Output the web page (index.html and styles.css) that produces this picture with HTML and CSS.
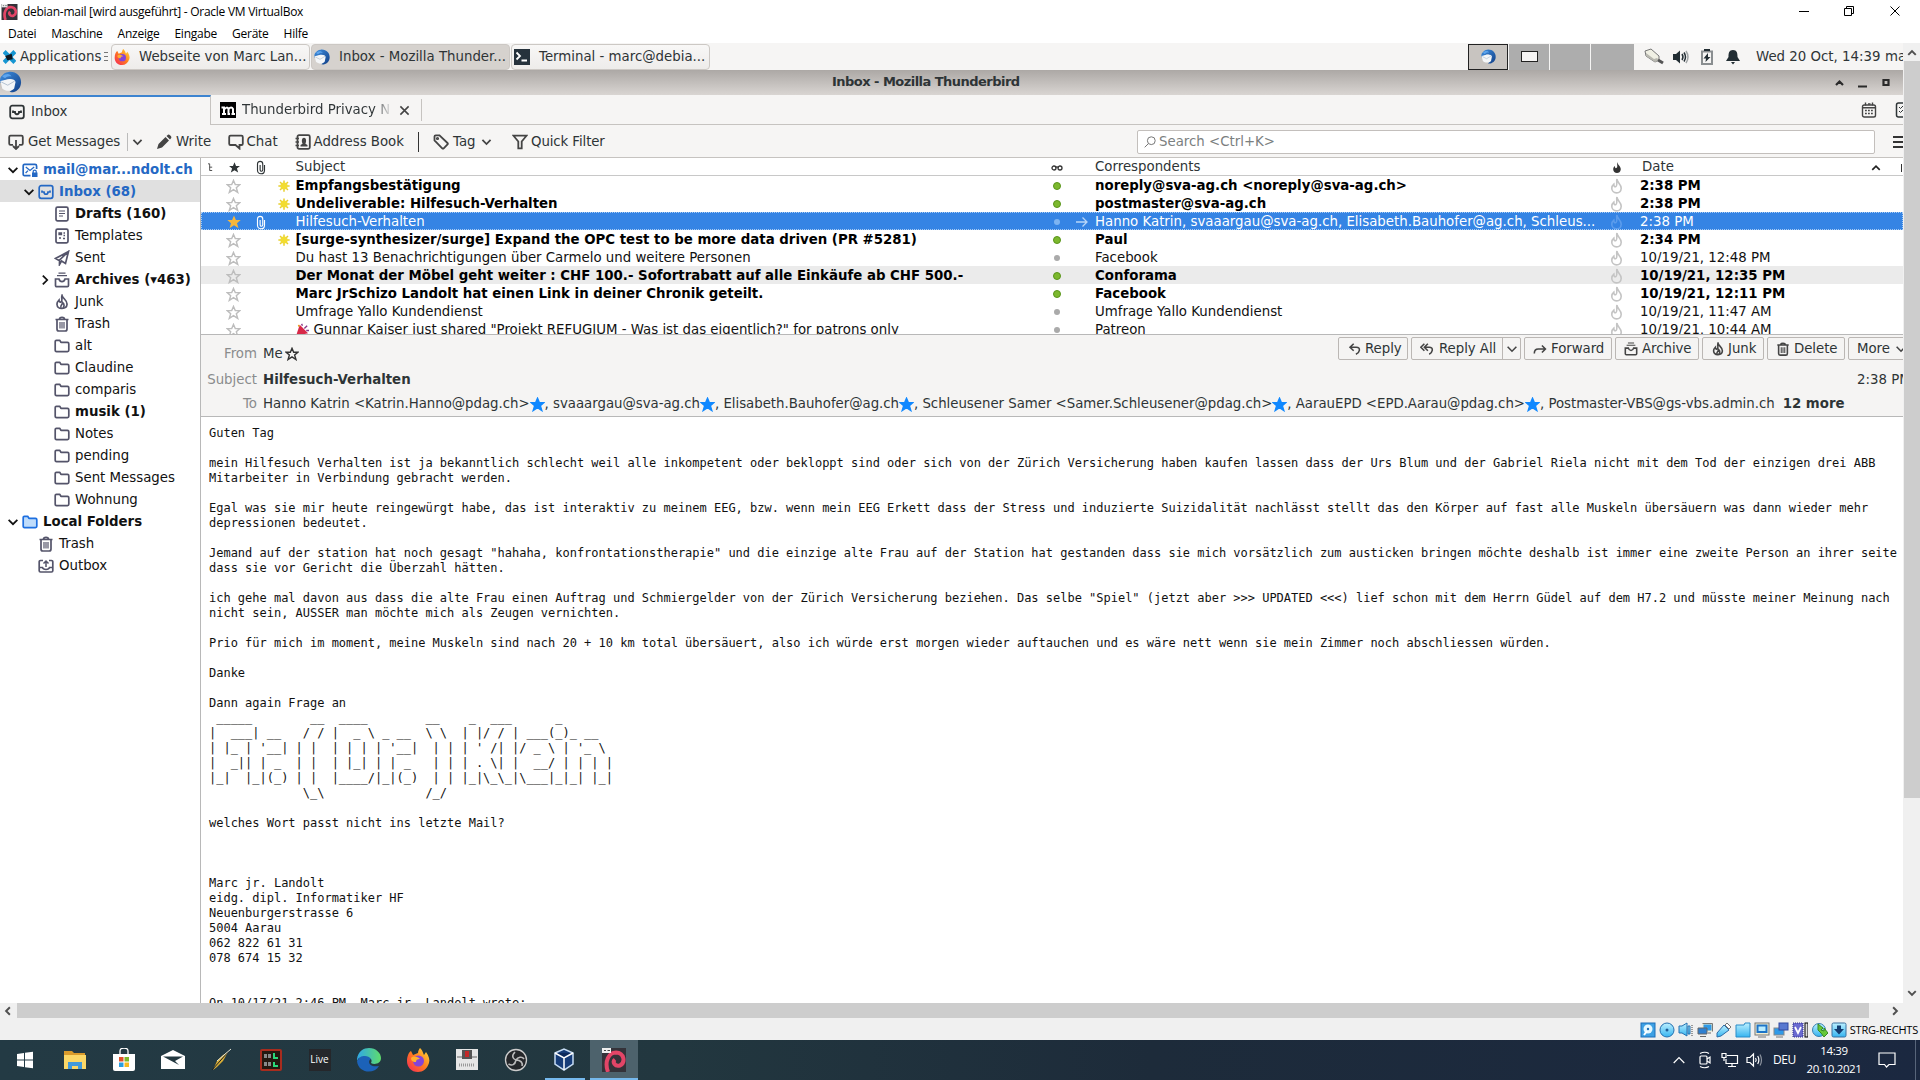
FILE: index.html
```html
<!DOCTYPE html>
<html lang="de">
<head>
<meta charset="utf-8">
<title>debian-mail - Oracle VM VirtualBox</title>
<link rel="stylesheet" href="styles.css">
</head>
<body>
<svg class="defs" aria-hidden="true">
  <defs>
    <linearGradient id="tbg" x1="0" y1="0" x2="1" y2="1"><stop offset="0" stop-color="#3f8fe0"/><stop offset="1" stop-color="#123f86"/></linearGradient>
    <linearGradient id="ffg" x1="1" y1="0" x2="0" y2="1"><stop offset="0" stop-color="#ffe23a"/><stop offset=".5" stop-color="#ff7a1f"/><stop offset="1" stop-color="#f5225c"/></linearGradient>
    <linearGradient id="edg" x1="0" y1="0" x2="1" y2="0"><stop offset="0" stop-color="#2fa8e8"/><stop offset="1" stop-color="#5fdc6c"/></linearGradient>
    <linearGradient id="sky" x1="0" y1="0" x2="0" y2="1"><stop offset="0" stop-color="#bdf0ff"/><stop offset="1" stop-color="#35b4f0"/></linearGradient>
  </defs>
  <symbol id="thunderbird" viewBox="0 0 24 24"><path fill="url(#tbg)" d="M10 1C18 0 24 6 23.500 13C23 20 17 24 11 23C14 20 17 17 16 12C14 8 8 8 3 12L1 13C0 9 1 6 3 5C4 3 6 1.500 10 1Z"/><path fill="#f4f6f8" d="M1 11L7 9.500C12 8 17 9 17.500 12L16 19C13 23 6 22 3 19Z"/><path fill="none" stroke="#aebccd" d="M2 12L9 15.500L16.500 11"/><path fill="#5da5ee" d="M3 6C7 2 12 3 13 6C10 5 8 6 6 8Z"/></symbol>
  <symbol id="firefox" viewBox="0 0 24 24"><path fill="url(#ffg)" d="M14 0C17 3 17 5 18 7L20 4C23 8 24 12 23 15C21 21 17 24 12 24C5 24 1 19 1 13C1 8 3 4 5 3L7 7L12 5C12 3 13 1 14 0Z"/><circle cx="12.500" cy="13" r="5.500" fill="#8344d8"/><path fill="#ffb02e" d="M5 10C8 7 12 9 14 11C11 11 10 12 10 14C6 14 5 12 5 10Z"/></symbol>
  <symbol id="debian" viewBox="0 0 24 24"><rect width="24" height="24" fill="#343239"/><path fill="none" stroke="#e34567" stroke-width="4" d="M6 24C2 13 7 4.500 14 4.500C22 5 24 14 18 17.500C13 19 10 14 13 11.500"/><rect width="9" height="5" fill="#eee"/><path stroke="#444" d="M2 2.500H4M5.500 2.500H8"/></symbol>
  <symbol id="inbox" viewBox="0 0 16 16"><rect x="1.200" y="1.700" width="13.600" height="12.600" rx="2"/><path d="M4 6.500V8H6C6 11 10 11 10 8H12V6.500"/></symbol>
  <symbol id="chev" viewBox="0 0 16 16"><path d="M3 5.500L8 10.500L13 5.500"/></symbol>
  <symbol id="star" viewBox="0 0 16 16"><path d="M8 1.500L9.900 6H14.700L11 9.200L12.500 14.300L8 11.300L3.500 14.300L5 9.200L1.300 6H6.100Z"/></symbol>
  <symbol id="clip" viewBox="0 0 16 16"><path d="M12 5V11C12 16.500 4 16.500 4 11V4C4 0 10 0 10 4V10.500C10 12.800 7 12.800 7 10.500V5"/></symbol>
  <symbol id="flame" viewBox="0 0 16 16"><path d="M8 1.500C9 5 13.500 6 13 10.500C12.600 15.500 3.500 16 3 10.500C2.800 8.500 4 7 5 6C5 8 6 8.500 7 8C9 6.500 7 4 8 1.500Z"/><path d="M7 14C5.500 11.500 9 10.500 8.500 8.500C11 10.500 10 13 9 14"/></symbol>
  <symbol id="flame-thin" viewBox="0 0 14 18"><path d="M7.500 1.200C7.500 5 12.500 7 12.300 11.500C12 15.500 9.500 16.700 7 16.700C4 16.700 1.700 14.500 1.700 11.500C1.700 9.500 2.800 8 4 7C4 9.500 5 10.500 6.500 9.500C8.500 8 6.500 4 7.500 1.200Z"/></symbol>
  <symbol id="folder" viewBox="0 0 16 16"><path d="M1.200 12V3.600C1.200 2.800 1.600 2.400 2.400 2.400H5.600C6.300 2.400 6.500 4.400 7.300 4.400H13.500C14.400 4.400 14.800 4.900 14.800 5.700V12.300C14.800 13.200 14.300 13.600 13.500 13.600H2.500C1.600 13.600 1.200 13 1.200 12Z"/></symbol>
  <symbol id="trash" viewBox="0 0 16 16"><path d="M1.500 3.500H14.500M5.500 3C5.500 .8 10.500 .8 10.500 3M3 4V13C3 14.500 3.600 15 4.800 15H11.200C12.400 15 13 14.500 13 13V4"/><path stroke-width="1.200" d="M6 6V12.500M8 6V12.500M10 6V12.500"/></symbol>
  <symbol id="doc" viewBox="0 0 16 16"><rect x="2" y="1.200" width="12" height="13.600" rx="1.500"/><path stroke-width="1.200" d="M5 5H11M5 7.500H11M5 10H9"/></symbol>
  <symbol id="tpl" viewBox="0 0 16 16"><rect x="2" y="1.200" width="12" height="13.600" rx="1.500"/><path stroke-width="1.300" d="M5 5H7.500V6.500H5ZM9.500 5H11M9.500 7.500H11M5 10H7M9 10.500H11"/></symbol>
  <symbol id="sent" viewBox="0 0 16 16"><path d="M14.500 1.500L1.500 8.500L5 10.500L14.500 1.500L11.500 13.500L7.500 11L5.500 14.500V10.500"/></symbol>
  <symbol id="archive" viewBox="0 0 16 16"><path stroke-width="1.200" d="M4.500 1.200H11.500M3 3.600H13"/><path d="M1.500 7H5C6 10.500 10 10.500 11 7H14.500V13.500Q14.500 14.600 13.300 14.600H2.700Q1.500 14.600 1.500 13.500Z"/></symbol>
  <symbol id="outbox" viewBox="0 0 16 16"><path d="M5 2.500H2.500Q1.200 2.500 1.200 3.800V12.700Q1.200 14 2.500 14H13.500Q14.800 14 14.800 12.700V3.800Q14.800 2.500 13.500 2.500H11"/><path stroke-width="1.500" d="M8 9V3M5.500 5.500L8 3L10.500 5.500M2 9.500H4.500C5 12 11 12 11.500 9.500H14"/></symbol>
  <symbol id="account" viewBox="0 0 16 16"><path d="M8.500 13.600H2.500Q1.200 13.600 1.200 12.200V4Q1.200 2.400 2.500 2.400H13Q14.600 2.400 14.600 4V7"/><path stroke-width="1.300" d="M3.800 5L8 8.500L12.200 5M3.600 11L6 8.600"/><rect x="10" y="10.500" width="5.500" height="4.500" fill="currentColor" stroke="none"/><path stroke-width="1.200" d="M11.200 11V9.300C11.200 7.700 14.200 7.700 14.200 9.300V11"/></symbol>
  <symbol id="getmsg" viewBox="0 0 16 16"><path d="M5 10.800H2.500Q1.200 10.800 1.200 9.500V3Q1.200 1.700 2.500 1.700H13.500Q14.800 1.700 14.800 3V9.500Q14.800 10.800 13.500 10.800H11M8 6V15M5 12L8 15L11 12"/></symbol>
  <symbol id="pencil" viewBox="0 0 16 16"><path fill="currentColor" stroke="none" d="M1 15L2.500 10L9.500 3L13 6.500L6 13.500ZM10.500 2L12 .7Q13 .2 14 1.200L14.800 2Q15.800 3 15.200 4L14 5.500Z"/></symbol>
  <symbol id="chat" viewBox="0 0 16 16"><path d="M2.500 1.700H13.500Q14.800 1.700 14.800 3V9.700Q14.800 11 13.500 11H11.500V14.500L7.500 11H2.500Q1.200 11 1.200 9.700V3Q1.200 1.700 2.500 1.700Z"/></symbol>
  <symbol id="book" viewBox="0 0 16 16"><rect x="2.500" y="1.200" width="12.300" height="13.600" rx="1.500"/><path stroke-width="1.400" d="M.5 4.500H4M.5 8H4M.5 11.500H4"/><path fill="currentColor" stroke="none" d="M5.500 12.500V11L7.600 9.800C6.300 7 6.800 3.700 9 3.700S11.700 7 10.400 9.800L12.500 11V12.500Z"/></symbol>
  <symbol id="tag" viewBox="0 0 16 16"><path d="M1.500 2.500Q1.500 1.300 2.700 1.300H6.500L14.500 9Q15.200 9.700 14.500 10.500L10.700 14.300Q10 15 9.200 14.300L1.500 6.500Z"/><circle cx="4.500" cy="4.500" r=".7"/></symbol>
  <symbol id="funnel" viewBox="0 0 16 16"><path d="M1.500 1.700H14.500L9.700 7.500V14.300H6.300V7.500Z"/></symbol>
  <symbol id="reply" viewBox="0 0 16 16"><path d="M6.500 2L2.300 6L6.500 10M2.500 6H9.500Q13.500 6 13 9.500Q12.500 12.500 9 14"/></symbol>
  <symbol id="replyall" viewBox="0 0 16 16"><path d="M5 2L1 6L5 10M9 2L5 6L9 10M5.500 6H10.500Q14.500 6 14 9.500Q13.500 12.500 10.500 14"/></symbol>
  <symbol id="forward" viewBox="0 0 16 16"><path d="M1.500 13Q1.500 8 6 8H14M10.200 4L14.200 8L10.200 12"/></symbol>
  <symbol id="sun" viewBox="0 0 16 16"><path stroke="#e8cf2c" stroke-width="2" d="M8 .5V15.500M.5 8H15.500M2.700 2.700L13.300 13.300M13.300 2.700L2.700 13.300"/><circle cx="8" cy="8" r="4.800" fill="#f2dc30" stroke="none"/></symbol>
  <symbol id="cal" viewBox="0 0 16 16"><rect x="1.500" y="3" width="13" height="12" rx="1.800"/><path stroke-width="1.400" d="M4.500 .5V3.500M11.500 .5V3.500M7 2H9.500M2 5.700H14"/><path stroke-width="1.500" stroke-dasharray="1.800 1.200" d="M4 8.500H13M4 11.500H13"/></symbol>
  <symbol id="speaker" viewBox="0 0 16 16"><path fill="currentColor" stroke="none" d="M0 5H3L7 1.500V14.500L3 11H0Z"/><path d="M9 5Q11 8 9 11M11 3.500Q14 8 11 12.500"/><path opacity=".4" d="M13 2Q17 8 13 14"/></symbol>
</svg>

<header class="vm-title">
  <svg class="vm-icon"><use href="#debian"/></svg>
  <span class="vm-name">debian-mail [wird ausgeführt] - Oracle VM VirtualBox</span>
  <svg class="vm-controls" viewBox="0 0 104 12"><path d="M0 6.500H10M45.500 3.500H52.500V10.500H45.500ZM47.500 3.500V1.500H54.500V8.500H52.500M91.500 1.500L100.500 10.500M100.500 1.500L91.500 10.500"/></svg>
</header>
<nav class="vm-menu"><span>Datei</span><span>Maschine</span><span>Anzeige</span><span>Eingabe</span><span>Geräte</span><span>Hilfe</span></nav>

<main class="vm-view">
  <div class="guest">
    <div class="panel">
      <svg class="xfce" viewBox="0 0 12 12"><path stroke="#1696d2" stroke-width="4" d="M1 1L11 11M11 1L1 11"/><path fill="#101820" d="M2 5L8 3L9 8L4 9Z"/></svg>
      <span class="apps">Applications</span>
      <i class="grip"></i>
      <div class="task"><svg><use href="#firefox"/></svg><span>Webseite von Marc Lan...</span></div>
      <div class="task on"><svg><use href="#thunderbird"/></svg><span>Inbox - Mozilla Thunder...</span></div>
      <div class="task"><svg viewBox="0 0 16 16"><rect width="16" height="16" fill="#26323c"/><path fill="none" stroke="#fff" stroke-width="1.800" d="M2.500 3.500L6 7L2.500 10.500M7.500 11.500H13"/></svg><span>Terminal - marc@debia...</span></div>
      <div class="pager"><b class="cur"><svg><use href="#thunderbird"/></svg></b><b><i></i></b><b></b><b></b></div>
      <svg class="plug" viewBox="0 0 20 18"><path fill="#f0f0e4" stroke="#777" d="M1 3L7 1L15 8L15 12L11 14L2 8Z"/><path fill="#b8b8b0" d="M2 8L11 14L15 12L13 10L10 11L2 5Z"/><path stroke="#555" stroke-width="3" d="M14 12L19 15"/></svg>
      <svg class="tray-i spk"><use href="#speaker"/></svg>
      <svg class="tray-i bat" viewBox="0 0 16 16"><path stroke="#8a8e90" stroke-width="2" d="M3 2.500H13V15H3Z"/><path fill="#222d33" stroke="none" d="M5 0H11V2H5ZM9 4L4.500 9.500H7L6.500 13L11.500 8H9Z"/></svg>
      <svg class="tray-i bell" viewBox="0 0 16 16"><path fill="#222d33" stroke="none" d="M8 1C12 1 12.500 4 12.500 8L15 12H1L3.500 8C3.500 4 4 1 8 1ZM6 13H10L8 15.500Z"/></svg>
      <span class="clock">Wed 20 Oct, 14:39</span><span class="user">marc</span>
    </div>
    <div class="tb-title">
      <svg class="tb-logo"><use href="#thunderbird"/></svg>
      <strong>Inbox - Mozilla Thunderbird</strong>
      <svg class="tb-controls" viewBox="0 0 56 12"><path d="M1 8L4.500 4.500L8 8M23 9.500H32M48.500 3H53.500V8H48.500Z"/></svg>
    </div>
    <div class="tabs">
      <div class="tab sel"><svg class="ic"><use href="#inbox"/></svg><span>Inbox</span></div>
      <div class="tab second"><svg class="moz" viewBox="0 0 16 16"><rect width="16" height="16" fill="#000"/><path stroke="#fff" stroke-width="2" d="M1.500 5.500H4V12M4 7.500Q7 4 8.500 7V12M8.500 7Q11.500 4 13 7V12M2 12H6M7.500 12H10M11.500 12H15"/></svg><span class="fade">Thunderbird Privacy N</span><svg class="close" viewBox="0 0 12 12"><path d="M1.500 1.500L10.500 10.500M10.500 1.500L1.500 10.500"/></svg></div>
      <svg class="ic cal"><use href="#cal"/></svg>
      <svg class="ic tasks" viewBox="0 0 16 16"><rect x="1.500" y="1" width="13" height="14" rx="2"/><path stroke-width="1" d="M4 5L5.500 6.500L8 4M4 9L5.500 10.500L8 8"/></svg>
    </div>
    <div class="tools">
      <span class="tool t1"><svg class="ic"><use href="#getmsg"/></svg>Get Messages</span>
      <span class="drop"><svg class="ic"><use href="#chev"/></svg></span>
      <span class="tool t2"><svg class="ic"><use href="#pencil"/></svg>Write</span>
      <span class="tool t3"><svg class="ic"><use href="#chat"/></svg>Chat</span>
      <span class="tool t4"><svg class="ic"><use href="#book"/></svg>Address Book</span>
      <i class="sep"></i>
      <span class="tool t5"><svg class="ic"><use href="#tag"/></svg>Tag</span><svg class="ic tagdrop"><use href="#chev"/></svg>
      <span class="tool t6"><svg class="ic"><use href="#funnel"/></svg>Quick Filter</span>
      <div class="search"><svg viewBox="0 0 12 12"><circle cx="7.300" cy="4.700" r="3.900"/><path d="M4.500 7.500L.7 11.300"/></svg>Search &lt;Ctrl+K&gt;</div>
      <i class="burger"></i>
    </div>

    <div class="work">
      <aside class="tree">
        <div class="node l0 blue"><svg class="tw"><use href="#chev"/></svg><svg class="ic"><use href="#account"/></svg><b>mail@mar...ndolt.ch</b></div>
        <div class="node l1 blue hot"><svg class="tw"><use href="#chev"/></svg><svg class="ic"><use href="#inbox"/></svg><b>Inbox (68)</b></div>
        <div class="node l2"><svg class="ic"><use href="#doc"/></svg><b>Drafts (160)</b></div>
        <div class="node l2"><svg class="ic"><use href="#tpl"/></svg>Templates</div>
        <div class="node l2"><svg class="ic"><use href="#sent"/></svg>Sent</div>
        <div class="node l2 closed"><svg class="tw"><use href="#chev"/></svg><svg class="ic"><use href="#archive"/></svg><b>Archives (▾463)</b></div>
        <div class="node l2"><svg class="ic"><use href="#flame"/></svg>Junk</div>
        <div class="node l2"><svg class="ic"><use href="#trash"/></svg>Trash</div>
        <div class="node l2"><svg class="ic"><use href="#folder"/></svg>alt</div>
        <div class="node l2"><svg class="ic"><use href="#folder"/></svg>Claudine</div>
        <div class="node l2"><svg class="ic"><use href="#folder"/></svg>comparis</div>
        <div class="node l2"><svg class="ic"><use href="#folder"/></svg><b>musik (1)</b></div>
        <div class="node l2"><svg class="ic"><use href="#folder"/></svg>Notes</div>
        <div class="node l2"><svg class="ic"><use href="#folder"/></svg>pending</div>
        <div class="node l2"><svg class="ic"><use href="#folder"/></svg>Sent Messages</div>
        <div class="node l2"><svg class="ic"><use href="#folder"/></svg>Wohnung</div>
        <div class="node l0"><svg class="tw"><use href="#chev"/></svg><svg class="ic local"><use href="#folder"/></svg><b>Local Folders</b></div>
        <div class="node l1"><svg class="ic"><use href="#trash"/></svg>Trash</div>
        <div class="node l1"><svg class="ic"><use href="#outbox"/></svg>Outbox</div>
      </aside>

      <section class="mail">
        <div class="list">
          <div class="row head"><svg class="thr" viewBox="0 0 8 12"><path d="M1 1H3V9H6M3 5H6"/></svg><svg class="st full"><use href="#star"/></svg><svg class="cl"><use href="#clip"/></svg><span></span><span>Subject</span><svg class="gl" viewBox="0 0 12 8"><circle cx="3" cy="4" r="2"/><circle cx="9" cy="4" r="2"/><path d="M4 3H8"/></svg><span></span><span>Correspondents</span><svg class="fl full"><use href="#flame-thin"/></svg><span class="hd">Date</span><svg class="sort"><use href="#chev"/></svg><i class="pick"></i></div>
          <div class="row new"><span></span><svg class="st"><use href="#star"/></svg><span></span><svg class="sn"><use href="#sun"/></svg><span>Empfangsbestätigung</span><i class="dot"></i><span></span><span>noreply@sva-ag.ch &lt;noreply@sva-ag.ch&gt;</span><svg class="fl"><use href="#flame-thin"/></svg><span>2:38 PM</span></div>
          <div class="row new"><span></span><svg class="st"><use href="#star"/></svg><span></span><svg class="sn"><use href="#sun"/></svg><span>Undeliverable: Hilfesuch-Verhalten</span><i class="dot"></i><span></span><span>postmaster@sva-ag.ch</span><svg class="fl"><use href="#flame-thin"/></svg><span>2:38 PM</span></div>
          <div class="row picked"><span></span><svg class="st full"><use href="#star"/></svg><svg class="cl"><use href="#clip"/></svg><span></span><span>Hilfesuch-Verhalten</span><i class="dot"></i><svg class="ar" viewBox="0 0 12 12"><path d="M0 6H11M6.500 1.500L11 6L6.500 10.500"/></svg><span>Hanno Katrin, svaaargau@sva-ag.ch, Elisabeth.Bauhofer@ag.ch, Schleus...</span><svg class="fl"><use href="#flame-thin"/></svg><span>2:38 PM</span></div>
          <div class="row new"><span></span><svg class="st"><use href="#star"/></svg><span></span><svg class="sn"><use href="#sun"/></svg><span>[surge-synthesizer/surge] Expand the OPC test to be more data driven (PR #5281)</span><i class="dot"></i><span></span><span>Paul</span><svg class="fl"><use href="#flame-thin"/></svg><span>2:34 PM</span></div>
          <div class="row"><span></span><svg class="st"><use href="#star"/></svg><span></span><span></span><span>Du hast 13 Benachrichtigungen über Carmelo und weitere Personen</span><i class="dot"></i><span></span><span>Facebook</span><svg class="fl"><use href="#flame-thin"/></svg><span>10/19/21, 12:48 PM</span></div>
          <div class="row new hover"><span></span><svg class="st"><use href="#star"/></svg><span></span><span></span><span>Der Monat der Möbel geht weiter : CHF 100.- Sofortrabatt auf alle Einkäufe ab CHF 500.-</span><i class="dot"></i><span></span><span>Conforama</span><svg class="fl"><use href="#flame-thin"/></svg><span>10/19/21, 12:35 PM</span></div>
          <div class="row new"><span></span><svg class="st"><use href="#star"/></svg><span></span><span></span><span>Marc JrSchizo Landolt hat einen Link in deiner Chronik geteilt.</span><i class="dot"></i><span></span><span>Facebook</span><svg class="fl"><use href="#flame-thin"/></svg><span>10/19/21, 12:11 PM</span></div>
          <div class="row"><span></span><svg class="st"><use href="#star"/></svg><span></span><span></span><span>Umfrage Yallo Kundendienst</span><i class="dot"></i><span></span><span>Umfrage Yallo Kundendienst</span><svg class="fl"><use href="#flame-thin"/></svg><span>10/19/21, 11:47 AM</span></div>
          <div class="row"><span></span><svg class="st"><use href="#star"/></svg><span></span><span></span><span><svg class="party" viewBox="0 0 14 14"><path fill="#d82848" d="M4 2L13 11L0 14Z"/><path stroke="#8a3a8a" stroke-width="1.500" d="M6 1L7 3M9 6L12 3M11 8H14"/><circle cx="3" cy="3" r="1" fill="#e8a020"/></svg>Gunnar Kaiser just shared "Projekt REFUGIUM - Was ist das eigentlich?" for patrons only</span><i class="dot"></i><span></span><span>Patreon</span><svg class="fl"><use href="#flame-thin"/></svg><span>10/19/21, 10:44 AM</span></div>
        </div>

        <div class="msg-head">
          <div class="actions">
            <span class="btn b1"><svg class="ic"><use href="#reply"/></svg>Reply</span>
            <span class="btn b2"><svg class="ic"><use href="#replyall"/></svg>Reply All<em><svg class="ic"><use href="#chev"/></svg></em></span>
            <span class="btn b3"><svg class="ic"><use href="#forward"/></svg>Forward</span>
            <span class="btn b4"><svg class="ic"><use href="#archive"/></svg>Archive</span>
            <span class="btn b5"><svg class="ic"><use href="#flame"/></svg>Junk</span>
            <span class="btn b6"><svg class="ic"><use href="#trash"/></svg>Delete</span>
            <span class="btn b7">More<svg class="ic"><use href="#chev"/></svg></span>
          </div>
          <div class="field from"><label>From</label><span>Me</span><svg class="me"><use href="#star"/></svg></div>
          <div class="field subj"><label>Subject</label><b>Hilfesuch-Verhalten</b><time>2:38 PM</time></div>
          <div class="field to"><label>To</label><span>Hanno Katrin &lt;Katrin.Hanno@pdag.ch&gt;</span><svg class="bs"><use href="#star"/></svg><span>, svaaargau@sva-ag.ch</span><svg class="bs"><use href="#star"/></svg><span>, Elisabeth.Bauhofer@ag.ch</span><svg class="bs"><use href="#star"/></svg><span>, Schleusener Samer &lt;Samer.Schleusener@pdag.ch&gt;</span><svg class="bs"><use href="#star"/></svg><span>, AarauEPD &lt;EPD.Aarau@pdag.ch&gt;</span><svg class="bs"><use href="#star"/></svg><span>, Postmaster-VBS@gs-vbs.admin.ch</span><b class="more">12 more</b></div>
        </div>

<pre class="body">Guten Tag

mein Hilfesuch Verhalten ist ja bekanntlich schlecht weil alle inkompetent oder bekloppt sind oder sich von der Zürich Versicherung haben kaufen lassen dass der Urs Blum und der Gabriel Riela nicht mit dem Tod der einzigen drei ABB
Mitarbeiter in Verbindung gebracht werden.

Egal was sie mir heute reingewürgt habe, das ist interaktiv zu meinem EEG, bzw. wenn mein EEG Erkett dass der Stress und induzierte Suizidalität nachlässt stellt das den Körper auf fast alle Muskeln übersäuern was dann wieder mehr
depressionen bedeutet.

Jemand auf der station hat noch gesagt "hahaha, konfrontationstherapie" und die einzige alte Frau auf der Station hat gestanden dass sie mich vorsätzlich zum austicken bringen möchte deshalb ist immer eine zweite Person an ihrer seite
dass sie vor Gericht die Überzahl hätten.

ich gehe mal davon aus dass die alte Frau einen Auftrag und Schmiergelder von der Zürich Versicherung beziehen. Das selbe "Spiel" (jetzt aber &gt;&gt;&gt; UPDATED &lt;&lt;&lt;) lief schon mit dem Herrn Güdel auf dem H7.2 und müsste meiner Meinung nach
nicht sein, AUSSER man möchte mich als Zeugen vernichten.

Prio für mich im moment, meine Muskeln sind nach 20 + 10 km total übersäuert, also ich würde erst morgen wieder auftauchen und es wäre nett wenn sie mein Zimmer noch abschliessen würden.

Danke

Dann again Frage an
 _____        __  ____        __    _  ___      _
|  ___| __   / / |  _ \ _ __  \ \  | |/ / | ___(_)_ __
| |_ | '__| | |  | | | | '__|  | | | ' /| |/ _ \ | '_ \
|  _|| | _  | |  | |_| | | _   | | | . \| |  __/ | | | |
|_|  |_|(_) | |  |____/|_|(_)  | | |_|\_\_|\___|_|_| |_|
             \_\              /_/

welches Wort passt nicht ins letzte Mail?



Marc jr. Landolt
eidg. dipl. Informatiker HF
Neuenburgerstrasse 6
5004 Aarau
062 822 61 31
078 674 15 32


On 10/17/21 2:46 PM, Marc jr. Landolt wrote:</pre>
      </section>
    </div>
  </div>
  <div class="vscroll"><svg class="arr up"><use href="#chev"/></svg><i></i><svg class="arr"><use href="#chev"/></svg></div>
</main>
<div class="hscroll"><svg class="arr left"><use href="#chev"/></svg><i></i><svg class="arr right"><use href="#chev"/></svg></div>

<footer class="vm-status">
  <svg viewBox="0 0 16 16"><rect x="1" y="1" width="14" height="14" fill="#3da0e4" stroke="#1e6fb8"/><circle cx="8" cy="7" r="4.500" fill="#e4f8ff"/><circle cx="8" cy="7" r="1.200" fill="#1e6fb8"/><path stroke="#fff" stroke-width="2" d="M7 9L4 13"/></svg>
  <svg viewBox="0 0 16 16"><circle cx="8" cy="8" r="7" fill="url(#sky)" stroke="#2470b0"/><circle cx="8" cy="8" r="1.500" fill="#1c5c98"/></svg>
  <svg viewBox="0 0 16 16"><path stroke="#999" stroke-width="2" stroke-dasharray="1 1" d="M14 3V15"/><path fill="url(#sky)" stroke="#2470b0" d="M1 4H4L9 1V14L4 11H1ZM10 4H12V12H10Z"/></svg>
  <svg viewBox="0 0 16 16"><path fill="#2f9ae8" stroke="#eee8c8" d="M6 2H15V9H6Z"/><path stroke="#777" d="M5.500 1.500H15.500V9.500"/><path fill="#2f7fd0" stroke="#666" d="M1 6H10V12H1ZM3 14.500H9M11 11H14"/></svg>
  <svg viewBox="0 0 16 16"><path fill="url(#sky)" stroke="#2b6ca8" d="M1 11L8 3L13 8L5 14L1 15Z"/><path fill="#fff" stroke="#777" d="M9 3L11 1L15 5L13 7Z"/></svg>
  <svg viewBox="0 0 16 16"><path fill="url(#sky)" stroke="#2b8cc8" d="M1 3H9L10 1H15V15H1Z"/></svg>
  <svg viewBox="0 0 16 16"><rect x="1" y="1" width="14" height="12" fill="#f2eed2" stroke="#777"/><rect x="3.500" y="3.500" width="9" height="6.500" fill="#b8ecff" stroke="#1c74c8" stroke-width="2"/><path stroke="#777" d="M4 15H12"/></svg>
  <svg viewBox="0 0 16 16"><rect x="1" y="6" width="10" height="7" fill="#2f9ae8" stroke="#888"/><rect x="6" y="1" width="9" height="7" fill="#5878d0" stroke="#3048a0"/><path stroke="#777" d="M3 15H10"/></svg>
  <svg viewBox="0 0 16 16"><rect x="1" y="1" width="10" height="14" fill="#6a6ad0" stroke="#303088" stroke-dasharray="1 1"/><path fill="none" stroke="#fff" stroke-width="1.800" d="M3 5L6 11L9 5"/><rect x="13" y="1" width="3" height="14" fill="#ddd" stroke="#000"/></svg>
  <svg viewBox="0 0 16 16"><circle cx="7" cy="8" r="6.500" fill="url(#sky)" stroke="#3a80b0"/><path fill="#68c838" stroke="#3a8a20" d="M6 2L11 6L9 8L12 9V6L16 11L12 15L9 11L6 8Z"/></svg>
  <svg viewBox="0 0 16 16"><rect x="1" y="1" width="14" height="14" rx="1.500" fill="url(#sky)" stroke="#3a70a0"/><path fill="#143c70" d="M6 3.500H10V7H13L8 12.500L3 7H6Z"/></svg>
  <span>STRG-RECHTS</span>
</footer>

<div class="taskbar">
  <div class="app"><svg viewBox="0 0 24 24"><path fill="#fff" d="M4 6L11 5V11.500H4ZM12 4.800L20 3.800V11.500H12ZM4 12.500H11V19L4 18ZM12 12.500H20V20.300L12 19.200Z"/></svg></div>
  <div class="app"><svg viewBox="0 0 24 24"><path fill="#d99a2b" d="M1 3H9L11 5H22V9H1Z"/><path fill="#fbd767" d="M1 7H23V21H1Z"/><path fill="#4199dc" d="M5 21V14H19V21H15V18H9V21Z"/></svg></div>
  <div class="app"><svg viewBox="0 0 24 24"><path fill="none" stroke="#fff" stroke-width="1.300" d="M8 7V3Q8 0 12 0Q16 0 16 3V7"/><path fill="#fff" d="M1 6H23V21Q23 23 21 23H3Q1 23 1 21Z"/><path fill="#e0512b" d="M7 9H11.500V13.500H7Z"/><path fill="#7eb82a" d="M12.500 9H17V13.500H12.500Z"/><path fill="#2a9ee0" d="M7 14.500H11.500V19H7Z"/><path fill="#f8b91e" d="M12.500 14.500H17V19H12.500Z"/></svg></div>
  <div class="app"><svg viewBox="0 0 24 24"><path fill="#fff" d="M0 8L12 2L24 8V21H0Z"/><path fill="#233840" d="M2 8.500H22L14 13L18 17Z"/></svg></div>
  <div class="app"><svg viewBox="0 0 24 24"><path fill="#d8ad36" d="M3 22L7 13L13 7L18 4L13 13L7 19Z"/><path stroke="#222" d="M2 22L19 3"/><path stroke="#e8e8d8" d="M7 13L21 1"/></svg></div>
  <div class="app"><svg viewBox="0 0 24 24"><rect x="2" y="2" width="20" height="20" rx="1" fill="#23180f" stroke="#a82c1e" stroke-width="2"/><path fill="#888" d="M5 6H8V10H5ZM9 6H12V10H9ZM5 14H8V18H5ZM9 14H12V18H9Z"/><path fill="none" stroke="#28d878" stroke-width="2" d="M15 5V10H19M15 14V18H19"/></svg></div>
  <div class="app"><span class="live">Live</span></div>
  <div class="app"><svg viewBox="0 0 24 24"><path fill="#1c62b8" d="M1 12C3 6 13 6 14 11C10 13 12 20 22 18C17 27 1 25 0 13Z"/><path fill="url(#edg)" d="M0 11C1 3 7 0 12 0C19 0 24 5 24 10C24 16 17 17 14 15C16 12 13 8 8 8C4 8 1 10 0 13Z"/></svg></div>
  <div class="app"><svg><use href="#firefox"/></svg></div>
  <div class="app"><svg viewBox="0 0 24 24"><rect x="1" y="1" width="22" height="21" fill="#e6e6e6"/><path stroke="#666" d="M2 9H22"/><path stroke="#999" stroke-width="3" stroke-dasharray="1 1" d="M4 17H20"/><rect x="7" y="2" width="10" height="9" fill="#555"/><rect x="10" y="3" width="4" height="6" fill="#c42828"/></svg></div>
  <div class="app"><svg viewBox="0 0 24 24"><circle cx="12" cy="12" r="10.500" fill="#25272a" stroke="#ccc" stroke-width="1.300"/><path fill="none" stroke="#bbb" stroke-width="1.600" d="M11 4C7 8 9 11 12 12C17 12 19 15 18 18M12 12C11 17 8 18 4.500 16M12 12C14 9 18 8 20 11"/></svg></div>
  <div class="app run"><svg viewBox="0 0 24 24"><path fill="#163c78" stroke="#c6dcf4" stroke-width="1.500" d="M3 5L12 1L21 5V16L12 22L3 16Z"/><path fill="#0d2a5c" stroke="#fff" stroke-width="1.500" d="M3 5L12 10L21 5M12 10V22"/></svg></div>
  <div class="app run cur"><svg><use href="#debian"/></svg></div>
  <div class="systray">
    <svg class="s-up" viewBox="0 0 12 8"><path d="M.7 7L6 1.500L11.300 7"/></svg>
    <svg class="s-cam" viewBox="0 0 16 18"><rect x="3" y="5" width="7" height="8" rx="1"/><path d="M10 8L13 6V12L10 10M3 2.500Q8 0 12 2.500M3 15.500Q8 18 12 15.500"/></svg>
    <svg class="s-net" viewBox="0 0 18 16"><path d="M6 3.500H16.500V11.500H5V7M11 11.500V14.500M7 14.500H15M1 1.500H5V5.500H1ZM3 5.500V9"/></svg>
    <svg class="s-vol" viewBox="0 0 18 16"><path d="M1 5.500H4L7.500 2V14L4 10.500H1ZM9.500 6Q11 8 9.500 10M11.700 4Q14 8 11.700 12"/><path opacity=".5" d="M14 2.500Q17 8 14 13.500"/></svg>
    <span class="lang">DEU</span>
    <span class="time">14:39<br>20.10.2021</span>
    <svg class="s-note" viewBox="0 0 18 18"><path d="M1 2H17V13.500H11L8.500 16L6.500 13.500H1Z"/></svg>
    <i class="peek"></i>
  </div>
</div>
</body>
</html>
```
FILE: styles.css
```css
* { box-sizing: border-box; }
body { margin: 0; width: 1920px; height: 1080px; overflow: hidden; background: #fff; color: #2e3436; font: 13.33px/18px "DejaVu Sans", sans-serif; display: flex; flex-direction: column; white-space: nowrap; }
svg { display: block; flex: none; fill: none; }
.defs { position: absolute; width: 0; height: 0; }
i, em { display: block; flex: none; font-style: normal; }
.ic { width: 16px; height: 16px; stroke: currentColor; stroke-width: 1.8; }

/* host window */
.vm-title { height: 23px; flex: none; display: flex; align-items: center; padding-left: 1px; color: #000; font: 12px/16px "Open Sans", sans-serif; }
.vm-icon { width: 17px; height: 16px; margin-right: 5px; }
.vm-name { letter-spacing: -.27px; }
.vm-controls { width: 104px; height: 12px; margin: -2px 17px 0 auto; stroke: #000; }
.vm-menu { height: 20px; flex: none; display: flex; gap: 15px; padding: 3px 8px 0; color: #000; font: 12px/16px "Open Sans", sans-serif; letter-spacing: -.25px; }
.vm-view { height: 960px; flex: none; display: flex; }
.guest { width: 1903px; height: 960px; overflow: hidden; display: flex; flex-direction: column; }

/* desktop panel */
.panel { height: 27px; flex: none; display: flex; align-items: center; background: #f6f5f4; padding-left: 3px; }
.panel > * { flex: none; }
.xfce { width: 13px; height: 14px; }
.apps { width: 84px; padding-left: 4px; }
.grip { width: 4px; height: 10px; margin: 0 3px 0 4px; background: repeating-linear-gradient(#777 0 1px, transparent 1px 4px); }
.task { width: 199px; height: 26px; margin-right: 1px; display: flex; align-items: center; gap: 9px; padding-left: 2px; border: 1px solid #ccc8c4; border-radius: 4px; background: linear-gradient(#f8f7f6, #eeecea); }
.task svg { width: 16px; height: 16px; }
.task.on { background: #d6d2ce; }
.pager { display: flex; gap: 1px; margin-left: 757px; width: 166px; height: 26px; background: #f6f5f4; }
.pager b { width: 40px; background: #adadad; display: flex; align-items: center; justify-content: center; }
.pager b:last-child { width: 43px; }
.pager .cur { background: #c8c4c0; border: 1px solid #222; }
.pager svg { width: 17px; height: 15px; }
.pager i { width: 17px; height: 11px; background: #f6f5f4; border: 1px solid #222; }
.plug { width: 20px; height: 18px; margin-left: 10px; }
.tray-i { width: 16px; height: 16px; stroke: currentColor; stroke-width: 1.5; color: #222d33; }
.spk { margin-left: 9px; }
.bat { margin-left: 10px; }
.bell { margin-left: 10px; }
.clock { margin-left: 15px; width: 129px; }

/* mail window */
.tb-title { height: 25px; flex: none; display: flex; align-items: center; background: linear-gradient(#aca8a5, #d9d5d2); }
.tb-logo { width: 23px; height: 22px; margin: -2px 810px 0 -1px; }
.tb-title strong { font-size: 13px; letter-spacing: -.53px; width: 1003px; margin-top: -1px; }
.tb-controls { width: 56px; height: 12px; stroke: #2a2a2a; stroke-width: 2.2; }
.tabs { height: 30px; flex: none; display: flex; align-items: center; background: #f6f5f4; border-bottom: 1px solid #c6c3c0; }
.tab { display: flex; align-items: center; flex: none; }
.tab.sel { width: 211px; height: 30px; border-top: 2px solid #3d84d0; border-right: 1px solid #c6c3c0; background: #f6f5f4; padding: 1px 0 0 9px; margin-bottom: -1px; gap: 6px; }
.tab.second { width: 211px; height: 22px; border-right: 1px solid #c6c3c0; padding: 1px 0 0 9px; }
.moz { width: 16px; height: 16px; margin-right: 6px; }
.fade { width: 149px; overflow: hidden; background: linear-gradient(90deg, #2e3436 132px, transparent 150px); -webkit-background-clip: text; background-clip: text; color: transparent; }
.close { width: 11px; height: 11px; margin-left: 8px; stroke: #444; stroke-width: 1.7; }
.cal { margin-left: 1439px; color: #444; stroke-width: 1.4; }
.tasks { margin-left: 18px; stroke-width: 1.5; }
.tools { height: 33px; flex: none; display: flex; align-items: center; background: #f6f5f4; border-bottom: 1px solid #c6c3c0; padding: 1px 0 0 8px; }
.tools > * { flex: none; }
.tool { display: flex; gap: 4px; align-items: center; }
.tools .ic { color: #444; }
.t1 { width: 119px; letter-spacing: -.1px; }
.drop { border-left: 1px solid #bbb; padding-left: 3px; height: 18px; width: 29px; }
.drop .ic, .tagdrop { width: 13px; margin-top: 1px; stroke-width: 2.2; }
.t2 { width: 72px; }
.t3 { width: 67px; gap: 2.5px; }
.t4 { width: 123px; gap: 2.5px; }
.sep { width: 1px; height: 20px; background: #333; margin-right: 14px; }
.t5 { width: 47px; }
.tagdrop { margin-right: 19px; }
.t6 { width: 625px; letter-spacing: -.1px; }
.t6 .ic { margin-right: -1px; }
.search { width: 738px; height: 24px; display: flex; align-items: center; gap: 3px; border: 1px solid #c3bfbc; border-radius: 2px; background: #fff; padding-left: 6px; color: #7b7f80; }
.search svg { width: 12px; height: 12px; stroke: #777; }
.burger { width: 14px; height: 12px; margin-left: 18px; background: repeating-linear-gradient(#333 0 2px, transparent 2px 5px); }
.work { flex: 1; min-height: 0; display: flex; }

/* folder tree */
.tree { width: 201px; flex: none; background: #fff; border-right: 1px solid #b8b8b8; color: #111; }
.node { height: 22px; display: flex; align-items: center; gap: 5px; padding-top: 2px; }
.node .ic { color: #54546a; stroke-width: 1.7; }
.tw { width: 14px; height: 14px; margin-right: -3px; stroke: #111; stroke-width: 2; }
.l0 { padding-left: 6px; }
.l1 { padding-left: 38px; }
.l1 .tw { margin-left: -17px; }
.l1.hot { padding-left: 39px; }
.l2 { padding-left: 54px; }
.l2 .tw { margin-left: -16px; transform: rotate(-90deg); }
.blue { color: #2468c4; }
.blue .ic { color: #2468c4; }
.hot { background: #e0e0e0; }
.node .local { color: #1d6fe0; fill: #bfdcfb; }

/* message list */
.mail { flex: 1; min-width: 0; display: flex; flex-direction: column; }
.list { height: 177px; flex: none; overflow: hidden; border-bottom: 1px solid #b8b8b8; background: #fff; }
.row { height: 18px; padding-top: 1px; display: grid; grid-template-rows: 18px; grid-template-columns: 24px 32px 21px 17.5px 746.5px 31px 22px 513px 32px 232px 20px 1fr; align-items: center; color: #111; }
.row > span { line-height: 18px; }
.head { border-bottom: 1px solid #c8c8c8; color: #2e3436; grid-template-rows: 17px; }
.head > span { line-height: 16px; margin-top: -1px; }
.hd { padding-left: 2px; }
.new { font-weight: bold; color: #000; }
.hover { background: #ebebeb; }
.picked { background: #3584e4; color: #fff; outline: 1px dotted #a8ccf4; outline-offset: -1px; font-weight: normal; }
.thr { width: 7px; height: 10px; margin-left: 6px; stroke: #333; }
.st { width: 15px; height: 15px; margin-left: 1px; stroke: #bdbdbd; stroke-width: 1.5; }
.st.full { stroke: none; fill: #2e3436; width: 13px; height: 13px; margin-left: 3px; }
.picked .st.full { fill: #f6b73c; width: 16px; height: 16px; margin-left: 1px; }
.cl { width: 14px; height: 15px; margin-left: -3px; stroke: currentColor; stroke-width: 1.3; }
.sn { width: 12px; height: 12px; }
.gl { width: 12px; height: 8px; margin-left: 9px; stroke: #333; stroke-width: 1.3; }
.dot { width: 6px; height: 6px; border-radius: 50%; background: #aaa; margin-left: 12px; }
.new .dot { width: 8px; height: 8px; margin-left: 11px; background: #7cb82e; border: 1px solid #58941a; }
.picked .dot { background: #7db4f2; }
.ar { width: 12px; height: 12px; margin-left: 3px; stroke: #b8d6f8; stroke-width: 1.3; }
.fl { width: 13px; height: 16px; margin-left: 2px; stroke: #c4c4c4; stroke-width: 1.8; }
.fl.full { fill: #333; stroke: none; width: 10px; height: 13px; margin-left: 4px; }
.picked .fl { stroke: #5b9cec; }
.sort { width: 12px; height: 12px; transform: rotate(180deg); stroke: #222; stroke-width: 2.2; margin-left: -2px; }
.pick { width: 1px; height: 8px; background: #333; margin-left: 9px; }
.party { display: inline-block; width: 13px; height: 13px; margin: 0 5px -2px 0; }

/* message header */
.msg-head { height: 82px; flex: none; background: #f5f4f3; border-bottom: 1px solid #b8b8b8; position: relative; }
.actions { position: absolute; left: 1137px; top: 2px; display: flex; gap: 3px; }
.btn { height: 23px; display: flex; align-items: center; gap: 4px; padding-left: 10px; border: 1px solid #bbb7b4; border-radius: 2px; color: #2e3436; letter-spacing: -.05px; }
.btn .ic { width: 14px; height: 14px; margin-top: 1px; color: #444; }
.b1 { width: 70px; padding-left: 9px; gap: 3px; }
.b2 { width: 110px; padding-left: 8px; gap: 5px; }
.b2 em { border-left: 1px solid #bbb7b4; height: 21px; margin-left: 1px; padding: 3px 0 0 2px; }
.b3 { width: 88px; padding-left: 8px; }
.b4 { width: 84px; padding-left: 8px; }
.b5 { width: 62px; padding-left: 8px; gap: 3px; }
.b6 { width: 78px; padding-left: 8px; }
.b7 { width: 70px; padding-left: 8px; }
.field { display: flex; align-items: center; height: 18px; }
.field > * { flex: none; }
.from { padding-top: 2px; margin-top: 9px; }
.subj { margin-top: 9px; }
.to { margin-top: 6px; }
.field label { width: 56px; text-align: right; margin-right: 6px; color: #8a8c8d; }
.subj b { width: 148px; }
.subj time { margin-left: 1446px; }
.me { width: 14px; height: 14px; margin-left: 2px; stroke: #333; stroke-width: 1.6; }
.bs { width: 15px; height: 15px; margin-top: 1px; fill: #1088ff; stroke: #1088ff; stroke-width: 1.6; }
.to span { letter-spacing: -.025px; }
.more { margin-left: 8px; }

/* message text */
.body { margin: 0; flex: 1; min-height: 0; overflow: hidden; padding: 9px 0 0 8px; background: #fff; color: #111; font: 12px/15px "DejaVu Sans Mono", monospace; letter-spacing: -.011px; }

/* VM scrollbars */
.vscroll { width: 17px; background: #f0f0f0; display: flex; flex-direction: column; align-items: center; padding: 4px 0; }
.vscroll i { width: 16px; height: 737px; background: #cdcdcd; margin: 2px 0 auto 0; }
.arr { width: 12px; height: 12px; stroke: #505050; stroke-width: 2.6; }
.up { transform: rotate(180deg); }
.left { transform: rotate(90deg); }
.right { transform: rotate(-90deg); }
.hscroll { height: 15px; flex: none; background: #f0f0f0; display: flex; align-items: center; padding-left: 2px; }
.hscroll i { width: 1852px; height: 15px; background: #cdcdcd; margin: 0 20px 0 3px; }

/* VM status bar */
.vm-status { height: 22px; flex: none; background: #f0f0f0; display: flex; align-items: center; justify-content: flex-end; gap: 3.1px; padding: 2px 2px 0 0; color: #000; font: 11px/16px "Open Sans", sans-serif; letter-spacing: -.2px; }
.vm-status svg { width: 16px; height: 16px; }

/* host taskbar */
.taskbar { height: 40px; flex: none; display: flex; background: linear-gradient(90deg, #233a44 0, #22373f 35%, #1d2b3a 60%, #1b2840 100%); color: #fff; font-family: "Open Sans", sans-serif; }
.app { width: 49px; height: 40px; display: flex; align-items: center; justify-content: center; }
.app svg { width: 24px; height: 24px; }
.app:first-child { width: 50px; }
.live { width: 22px; height: 22px; background: #25272b; font: 10px/21px "Open Sans", sans-serif; text-align: center; }
.run { border-bottom: 2px solid #76b9ed; padding: 2px 3px 0 0; width: 40px; margin-left: 5px; }
.cur.run { width: 48px; margin-left: 5px; padding-right: 0; background: #4d626c; }
.systray { margin-left: auto; display: flex; align-items: center; }
.systray svg { stroke: #fff; stroke-width: 1.2; }
.s-up { width: 12px; height: 8px; margin-right: 12px; }
.s-cam { width: 16px; height: 18px; margin-right: 8px; }
.s-net { width: 18px; height: 16px; margin-right: 7px; }
.s-vol { width: 18px; height: 16px; margin-right: 9px; }
.lang { font-size: 12px; width: 29px; letter-spacing: -.5px; }
.time { width: 64px; font-size: 11.5px; line-height: 18px; text-align: center; letter-spacing: -.35px; }
.s-note { width: 18px; height: 18px; margin-left: 12px; }
.peek { width: 1px; height: 40px; background: #58657a; margin: 0 4px 0 19px; }
```
